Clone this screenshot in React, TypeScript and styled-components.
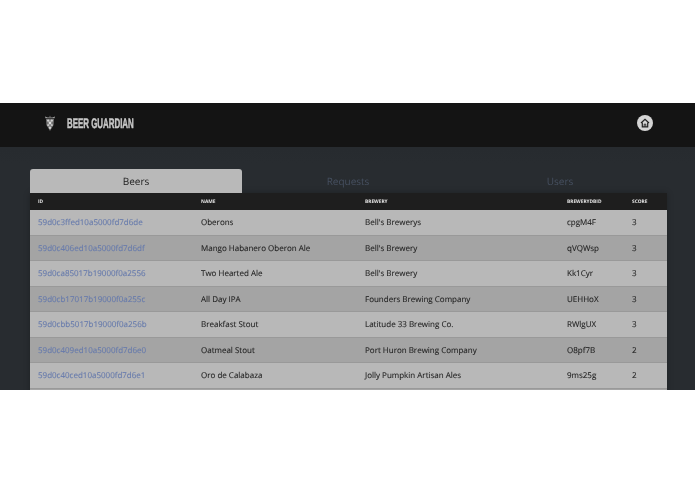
import styled, { createGlobalStyle } from "styled-components";

const GlobalStyle = createGlobalStyle`
  html, body {
    margin: 0;
    padding: 0;
    background: #ffffff;
  }
  body {
    font-family: "Open Sans", "Noto Sans", sans-serif;
    text-rendering: geometricPrecision;
  }
`;

const Page = styled.div`
  width: 695px;
  height: 494px;
  padding-top: 103px;
  box-sizing: border-box;
  overflow: hidden;
`;
const Frame = styled.div`
  height: 287px;
  overflow: hidden;
  background: #272b30;
  background-image: linear-gradient(#24282c, #282c30 60px);
  filter: blur(0.3px);
`;
const TopBar = styled.header`
  height: 44px;
  box-sizing: border-box;
  background: #141414;
  display: flex;
  align-items: center;
  padding: 0 42px 4px 43px;
`;
const Brand = styled.div`
  display: flex;
  align-items: center;
  gap: 10px;
  flex: 1;
`;
const BrandName = styled.span`
  font-family: "Liberation Sans", sans-serif;
  font-weight: 700;
  font-size: 14px;
  color: #c8c8c8;
  -webkit-text-stroke: 0.5px #c8c8c8;
  white-space: nowrap;
  transform: scaleX(0.565);
  transform-origin: left center;
`;
const Main = styled.main`
  padding: 22px 28px 0 30px;
`;
const Tabs = styled.nav`
  display: grid;
  grid-template-columns: repeat(3, 212px);
`;
const Tab = styled.div<{ $active?: boolean }>`
  height: 24px;
  line-height: 25px;
  text-align: center;
  font-size: 10px;
  color: ${(p) => (p.$active ? "#1c1c1c" : "#465060")};
  background: ${(p) => (p.$active ? "#b9b9b9" : "transparent")};
  border-radius: 3px 3px 0 0;
`;
const Table = styled.div`
  box-shadow: 0 0 6px rgba(0, 0, 0, 0.25);
`;
const columns = "163px 164px 202px 65px 43px";
const HeadRow = styled.div`
  display: grid;
  grid-template-columns: ${columns};
  height: 17px;
  align-items: center;
  background: #1e1e1e;
`;
const HeadCell = styled.div`
  padding-left: 8px;
  font-size: 4.8px;
  font-weight: 700;
  color: #e4e4e4;
  text-transform: uppercase;
  white-space: nowrap;
`;
const Row = styled.div<{ $odd: boolean }>`
  display: grid;
  grid-template-columns: ${columns};
  height: 25.5px;
  box-sizing: border-box;
  padding-top: 1px;
  align-items: center;
  background: ${(p) => (p.$odd ? "#b8b8b8" : "#a4a4a4")};
  border-bottom: 1px solid #999999;
`;
const Cell = styled.div`
  padding-left: 8px;
  font-size: 8px;
  color: #1f1f1f;
  -webkit-text-stroke: 0.1px #1f1f1f;
  white-space: nowrap;
`;
const IdLink = styled.a`
  font-size: 8px;
  color: #667aac;
  -webkit-text-stroke: 0.1px #667aac;
  text-decoration: none;
`;
const HomeButton = styled.button`
  width: 16px;
  height: 16px;
  padding: 0;
  border: 0;
  border-radius: 50%;
  background: #d4d4d4;
  display: flex;
  align-items: center;
  justify-content: center;
`;

const beers = [
  ["59d0c3ffed10a5000fd7d6de", "Oberons", "Bell's Brewerys", "cpgM4F", "3"],
  ["59d0c406ed10a5000fd7d6df", "Mango Habanero Oberon Ale", "Bell's Brewery", "qVQWsp", "3"],
  ["59d0ca85017b19000f0a2556", "Two Hearted Ale", "Bell's Brewery", "Kk1Cyr", "3"],
  ["59d0cb17017b19000f0a255c", "All Day IPA", "Founders Brewing Company", "UEHHoX", "3"],
  ["59d0cbb5017b19000f0a256b", "Breakfast Stout", "Latitude 33 Brewing Co.", "RWlgUX", "3"],
  ["59d0c409ed10a5000fd7d6e0", "Oatmeal Stout", "Port Huron Brewing Company", "O8pf7B", "2"],
  ["59d0c40ced10a5000fd7d6e1", "Oro de Calabaza", "Jolly Pumpkin Artisan Ales", "9ms25g", "2"],
];

function Logo() {
  return (
    <svg width="14" height="17" viewBox="0 0 14 17">
      <path d="M2 1.4 L4.5 2.4 H9.5 L12 1.4 L11.5 3.2 H2.5 Z" fill="#a8a8a8" />
      <path d="M7 0.4 L7.8 2.4 H6.2 Z" fill="#7c7c7c" />
      <path d="M3 4 H11 L10.6 10 L7 16 L3.4 10 Z" fill="#6f6f6f" />
      <circle cx="5.2" cy="5.6" r="1.2" fill="#cfcfcf" />
      <circle cx="8.8" cy="5.6" r="1.2" fill="#cfcfcf" />
      <circle cx="7" cy="8" r="1.4" fill="#dcdcdc" />
      <circle cx="5.2" cy="10.2" r="1.1" fill="#c0c0c0" />
      <circle cx="8.8" cy="10.2" r="1.1" fill="#c0c0c0" />
      <circle cx="7" cy="12.8" r="1.2" fill="#d0d0d0" />
    </svg>
  );
}

function HomeIcon() {
  return (
    <svg width="10" height="10" viewBox="0 0 10 10" fill="none" stroke="#222222" strokeWidth="1.2">
      <path d="M1 5 L5 1.4 L9 5" />
      <path d="M2.3 4.4 V8.8 H7.7 V4.4" />
      <path d="M4.2 8.8 V6.2 H5.8 V8.8" strokeWidth="0.9" />
    </svg>
  );
}

export default function App() {
  return (
    <Page>
      <GlobalStyle />
      <Frame>
        <TopBar>
          <Brand>
            <Logo />
            <BrandName>BEER GUARDIAN</BrandName>
          </Brand>
          <HomeButton aria-label="Home">
            <HomeIcon />
          </HomeButton>
        </TopBar>
        <Main>
          <Tabs>
            <Tab $active>Beers</Tab>
            <Tab>Requests</Tab>
            <Tab>Users</Tab>
          </Tabs>
          <Table>
            <HeadRow>
              <HeadCell>Id</HeadCell>
              <HeadCell>Name</HeadCell>
              <HeadCell>Brewery</HeadCell>
              <HeadCell>BreweryDBId</HeadCell>
              <HeadCell>Score</HeadCell>
            </HeadRow>
            {beers.map((beer, i) => (
              <Row key={beer[0]} $odd={i % 2 === 0}>
                <Cell>
                  <IdLink href="#">{beer[0]}</IdLink>
                </Cell>
                <Cell>{beer[1]}</Cell>
                <Cell>{beer[2]}</Cell>
                <Cell>{beer[3]}</Cell>
                <Cell>{beer[4]}</Cell>
              </Row>
            ))}
            <Row $odd={false} />
          </Table>
        </Main>
      </Frame>
    </Page>
  );
}
